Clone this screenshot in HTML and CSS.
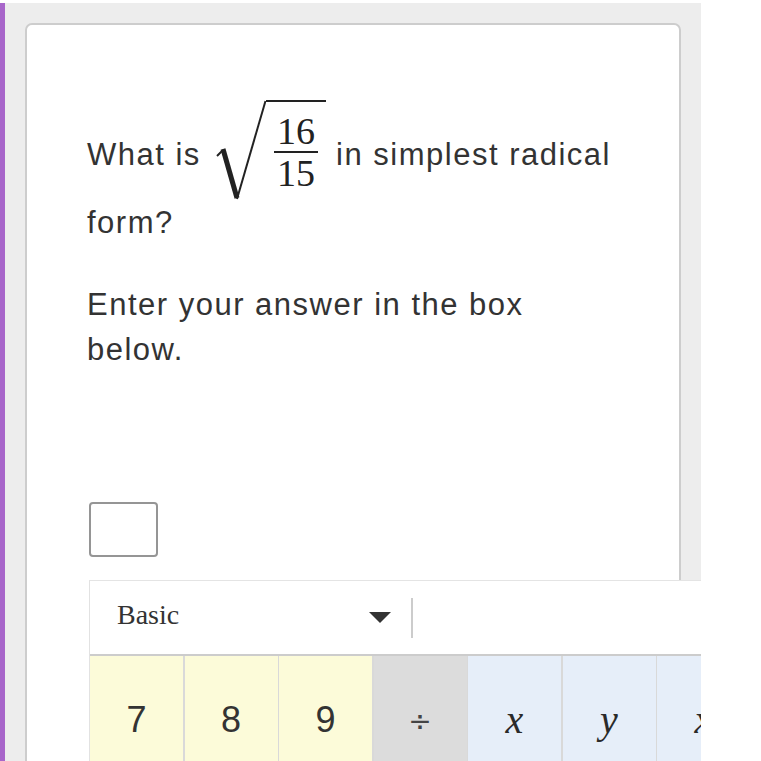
FILE: index.html
```html
<!DOCTYPE html>
<html>
<head>
<meta charset="utf-8">
<link rel="stylesheet" href="styles.css">
</head>
<body>
<div class="page">
  <div class="card">
    <p class="q q-first">What is <span class="math"><svg class="radical" width="57" height="100" viewBox="0 0 57 100"><path d="M8 56 L14 50" stroke="#222" stroke-width="2" fill="none"/><path d="M14 49 L28 98" stroke="#222" stroke-width="5" fill="none"/><path d="M28 99 L56.5 1" stroke="#222" stroke-width="2" fill="none"/></svg><span class="radicand"><span class="frac"><span class="num">16</span><span class="bar"></span><span class="den">15</span></span></span></span> in simplest radical form?</p>
    <p class="q q-second">Enter your answer in the box below.</p>
    <div class="answer"></div>
  </div>
  <div class="keypad">
    <div class="kp-head">
      <div class="kp-select"><span class="kp-label">Basic</span><span class="kp-caret"></span></div>
      <span class="kp-sep"></span>
    </div>
    <div class="kp-keys">
      <div class="key num">7</div>
      <div class="key num">8</div>
      <div class="key num">9</div>
      <div class="key op">÷</div>
      <div class="key var">x</div>
      <div class="key var">y</div>
      <div class="key var">x</div>
    </div>
  </div>
</div>
</body>
</html>
```

FILE: styles.css
```css
html, body {
  margin: 0;
  padding: 0;
  background: #ffffff;
  overflow: hidden;
}

.page {
  position: relative;
  box-sizing: border-box;
  margin-top: 3px;
  width: 701px;
  height: 758px;
  background: #ededed;
  border-left: 5px solid #a866ca;
  padding: 20px 0 0 20px;
  overflow: hidden;
}

.card {
  box-sizing: border-box;
  width: 656px;
  height: 820px;
  background: #ffffff;
  border: 2px solid #cdcdcd;
  border-radius: 7px;
  padding: 75px 52px 0 60px;
  color: #333333;
  font-family: "Liberation Sans", Arial, sans-serif;
  font-size: 31px;
  letter-spacing: 1.5px;
  line-height: 45px;
}

.q {
  margin: 0;
}

.q-second {
  margin-top: 37px;
}

.math {
  display: inline-block;
  vertical-align: -35px;
  height: 100px;
  margin-left: -2px;
  overflow: hidden;
  letter-spacing: 0;
  white-space: nowrap;
}

.radical {
  display: inline-block;
  vertical-align: top;
}

.radicand {
  display: inline-block;
  vertical-align: top;
  box-sizing: border-box;
  height: 100px;
  width: 60px;
  border-top: 2px solid #222;
  padding: 10px 8px 0 8px;
}

.frac {
  display: flex;
  flex-direction: column;
  align-items: center;
  width: 44px;
  font-family: "Liberation Serif", "Times New Roman", serif;
  font-size: 38px;
  line-height: 38px;
  color: #222;
}

.bar {
  display: block;
  width: 44px;
  height: 2px;
  background: #222;
  margin: 1px 0;
}

.answer {
  box-sizing: border-box;
  margin: 130px 0 0 2px;
  width: 69px;
  height: 55px;
  border: 2px solid #959595;
  border-radius: 4px;
  background: #fff;
}

.keypad {
  position: absolute;
  left: 84px;
  top: 577px;
  width: 720px;
  background: #ffffff;
  border-left: 1px solid #e2e2e2;
  border-top: 1px solid #e4e4e4;
}

.kp-head {
  display: flex;
  align-items: center;
  height: 73px;
  border-bottom: 2px solid #cccccc;
}

.kp-select {
  box-sizing: border-box;
  display: flex;
  align-items: center;
  width: 301px;
  padding: 0 0 5px 27px;
}

.kp-label {
  font-family: "Liberation Serif", "Times New Roman", serif;
  font-size: 28px;
  color: #333;
}

.kp-caret {
  margin-left: auto;
  margin-top: 4px;
  width: 0;
  height: 0;
  border-left: 11px solid transparent;
  border-right: 11px solid transparent;
  border-top: 11px solid #333;
}

.kp-sep {
  margin-left: 20px;
  width: 2px;
  height: 40px;
  background: #cccccc;
}

.kp-keys {
  display: grid;
  grid-template-columns: repeat(7, 93px);
  column-gap: 1.5px;
  background: #d9d9d9;
  height: 120px;
}

.key {
  box-sizing: border-box;
  text-align: center;
  padding-top: 46px;
  font-family: "Liberation Sans", Arial, sans-serif;
  font-size: 36px;
  line-height: 36px;
  color: #333;
}

.key.num {
  background: #fcfbd9;
}

.key.op {
  background: #dcdcdc;
  color: #444;
  font-family: "DejaVu Sans", sans-serif;
  font-size: 28px;
  padding-top: 48px;
}

.key.var {
  background: #e6eef9;
  font-family: "Liberation Serif", "Times New Roman", serif;
  font-style: italic;
  font-size: 40px;
  color: #2a2a2a;
}
```
